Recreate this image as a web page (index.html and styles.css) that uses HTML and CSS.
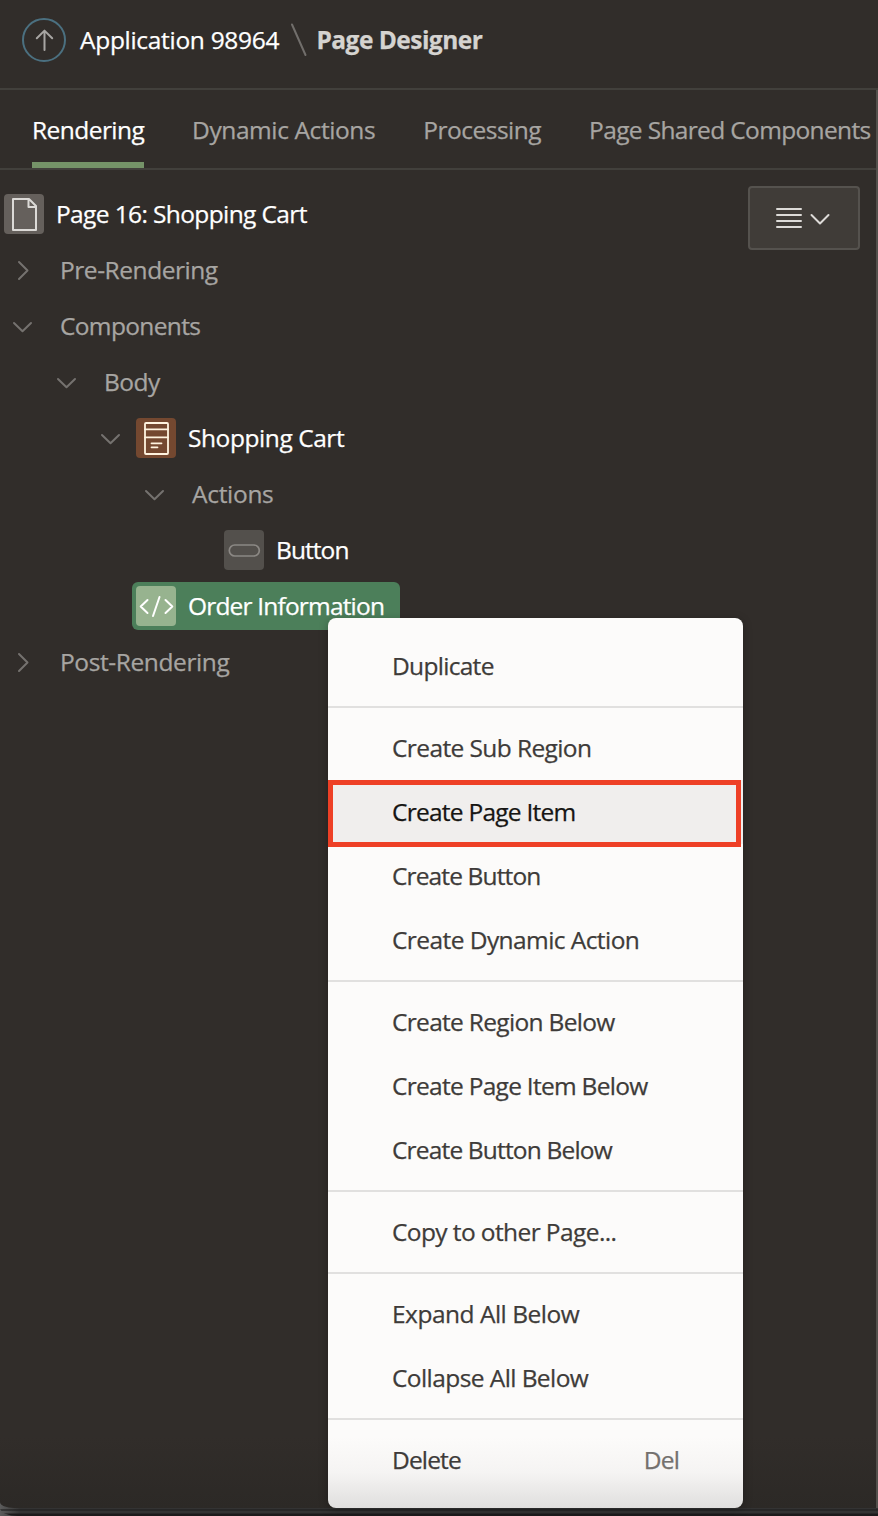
FILE: index.html
```html
<!DOCTYPE html>
<html lang="en">
<head>
<meta charset="utf-8">
<title>Page Designer</title>
<link rel="stylesheet" href="styles.css">
</head>
<body>
<svg class="defs" width="0" height="0" aria-hidden="true">
  <symbol id="down" viewBox="0 0 24 24"><path d="M4 9 12.500 17.300 21 9"/></symbol>
  <symbol id="right" viewBox="0 0 24 24"><path d="M13 4 21.500 12.500 13 21" transform="translate(-4 0)"/></symbol>
</svg>
<div class="app">
  <header class="header">
    <a class="up"><svg width="44" height="44" viewBox="0 0 44 44"><circle cx="22" cy="22" r="21"/><path d="M22.500 32V13M14.800 20.200 22.500 12.600 30.200 20.200"/></svg></a>
    <span class="crumb">Application 98964</span>
    <svg class="slash" width="18" height="34" viewBox="0 0 18 34"><path d="M2 1.500 15.500 32"/></svg>
    <span class="crumb current">Page Designer</span>
  </header>
  <div class="panel">
    <nav class="tabs">
      <a class="tab active">Rendering</a>
      <a class="tab dyn">Dynamic Actions</a>
      <a class="tab proc">Processing</a>
      <a class="tab shared">Page Shared Components</a>
    </nav>
    <div class="content">
      <ul class="tree">
        <li class="row"><span class="icon page"><svg viewBox="0 0 40 40"><path d="M9 5H25L32 12V36H9ZM24.500 5V13H32"/></svg></span><span class="name t-page">Page 16: Shopping Cart</span></li>
        <li class="row l1"><svg class="chev"><use href="#right"/></svg><span class="name muted t-pre">Pre-Rendering</span></li>
        <li class="row l1"><svg class="chev"><use href="#down"/></svg><span class="name muted t-comp">Components</span></li>
        <li class="row l2"><svg class="chev"><use href="#down"/></svg><span class="name muted t-body">Body</span></li>
        <li class="row l3"><svg class="chev"><use href="#down"/></svg><span class="node"><span class="icon cart"><svg viewBox="0 0 40 40"><rect x="9" y="5" width="23" height="31" rx="1"/><path d="M9 11.300H32M9 19.300H32M15.500 25.300H25.500M15.500 29.300H21.500"/></svg></span><span class="name t-cart">Shopping Cart</span></span></li>
        <li class="row l4"><svg class="chev"><use href="#down"/></svg><span class="name muted t-act">Actions</span></li>
        <li class="row l5"><span class="icon button"><svg viewBox="0 0 40 40"><rect x="5.300" y="15" width="30" height="11" rx="5.500"/></svg></span><span class="name t-btn">Button</span></li>
        <li class="row leaf"><span class="node selected"><span class="icon code"><svg viewBox="0 0 40 40"><path d="M11.500 14 4.700 20.500 11.500 27M29.500 14 36.300 20.500 29.500 27M23.500 11 17 30"/></svg></span><span class="name t-order">Order Information</span></span></li>
        <li class="row l1"><svg class="chev"><use href="#right"/></svg><span class="name muted t-post">Post-Rendering</span></li>
      </ul>
      <button class="view"><svg width="26" height="22" viewBox="0 0 26 22"><path d="M1 2H25M1 8H25M1 14H25M1 20H25"/></svg><svg width="20" height="16" viewBox="0 0 20 16"><path d="M1.500 5 10 13.500 18.500 5"/></svg></button>
    </div>
  </div>
  <footer class="edge"></footer>
  <div class="menu">
    <div class="group"><a class="m-dup">Duplicate</a></div>
    <div class="group"><a class="m-sub">Create Sub Region</a><a class="m-item hot">Create Page Item</a><a class="m-but">Create Button</a><a class="m-dyn">Create Dynamic Action</a></div>
    <div class="group"><a class="m-reg">Create Region Below</a><a class="m-pib">Create Page Item Below</a><a class="m-bb">Create Button Below</a></div>
    <div class="group"><a class="m-copy">Copy to other Page...</a></div>
    <div class="group"><a class="m-exp">Expand All Below</a><a class="m-col">Collapse All Below</a></div>
    <div class="group"><a class="m-del"><span>Delete</span><span class="key">Del</span></a></div>
  </div>
</div>
</body>
</html>
```
FILE: styles.css
```css
* { box-sizing: border-box; }
body { margin: 0; font: 24.5px/1 "Open Sans", "Noto Sans", sans-serif; background: #312d2a; color: #fff; -webkit-text-stroke: 0.25px currentColor; }
svg { display: block; fill: none; stroke-linecap: round; stroke-linejoin: round; }
.defs { position: absolute; }
.app { position: relative; display: flex; flex-direction: column; width: 878px; height: 1516px; overflow: hidden; white-space: nowrap; background: linear-gradient(90deg, #5c5c5c, #333 20px); }
.header { display: flex; align-items: center; height: 90px; padding: 0 0 8px 22px; background: #312d2a; border-bottom: 2px solid #42403c; }
.up circle { stroke: #4b7080; stroke-width: 2; }
.up path { stroke: #a8a6a3; stroke-width: 2; }
.crumb { margin-left: 14px; width: 199px; letter-spacing: -0.3px; }
.slash { margin-left: 11px; stroke: #716e6b; stroke-width: 2; }
.crumb.current { margin-left: 8.5px; width: auto; font-weight: 700; color: #d5d3d0; letter-spacing: -0.53px; }
.panel { display: flex; flex-direction: column; flex: 1; border-right: 2px solid #53504c; border-bottom-left-radius: 14px 6px; background: linear-gradient(#312d2a 95%, #2c2926); }
.tabs { display: flex; gap: 48px; height: 80px; padding-left: 32px; border-bottom: 2px solid #42403c; }
.tab { height: 78px; line-height: 80px; color: #a7a5a2; }
.tab.active { width: 112px; color: #fff; border-bottom: 6px solid #759368; letter-spacing: -0.55px; }
.dyn { letter-spacing: -0.4px; }
.proc { letter-spacing: -0.5px; }
.shared { letter-spacing: -0.65px; }
.content { display: flex; justify-content: space-between; align-items: flex-start; padding: 16px 16px 0 4px; }
.tree { margin: 0; padding: 0; list-style: none; }
.row { display: flex; align-items: center; height: 56px; }
.icon { display: block; width: 40px; height: 40px; border-radius: 4px; margin-right: 12px; }
.icon svg { width: 40px; height: 40px; stroke-width: 2; }
.page { background: #65605c; }
.page svg { stroke: #dcdad7; }
.cart { background: #744830; }
.cart svg { stroke: #fff3df; stroke-width: 1.8; }
.button { background: #53504c; }
.button svg { stroke: #8b8884; stroke-width: 1.7; }
.code { background: #97b38f; }
.code svg { stroke: #fff; }
.muted { color: #a7a5a2; }
.t-page { letter-spacing: -0.62px; }
.t-pre { letter-spacing: -0.45px; }
.t-comp { letter-spacing: -0.65px; }
.t-body { letter-spacing: -0.5px; }
.t-cart { letter-spacing: -0.43px; }
.t-act { letter-spacing: -0.3px; }
.t-btn { letter-spacing: -0.93px; }
.t-order { letter-spacing: -0.82px; }
.t-post { letter-spacing: -0.4px; }
.chev { width: 24px; height: 24px; stroke: #75726f; stroke-width: 2; margin-right: 26px; }
.l1 { padding-left: 6px; }
.l2 { padding-left: 50px; }
.l3 { padding-left: 94px; }
.l3 .chev { margin-right: 14px; }
.l4 { padding-left: 138px; }
.l5 { padding-left: 220px; }
.leaf { padding-left: 128px; }
.node { display: flex; align-items: center; }
.selected { width: 268px; height: 48px; padding-left: 4px; border-radius: 6px; background: #4c7f5a; }
.view { display: flex; align-items: center; justify-content: center; gap: 8px; width: 112px; height: 64px; padding: 0 3px 0 0; border: 2px solid #55524e; border-radius: 4px; background: #403c38; stroke: #dddbd8; stroke-width: 2; }
.edge { height: 8px; border-bottom-left-radius: 18px 8px; background: linear-gradient(transparent 1px, #1f1f1f99 1px 3px, transparent 3px 5px, #1c1a1b 6px); }
.menu { position: absolute; left: 328px; top: 618px; width: 415px; height: 890px; padding: 8px 0; border-radius: 8px; background: linear-gradient(#fcfbfa 92%, #f5f4f3 96%, #e0dfde); box-shadow: 0 2px 10px #0004; color: #3e3b39; }
.group { padding: 8px 0; border-top: 2px solid #e1e0df; }
.group:first-child { border-top: 0; }
.menu a { position: relative; display: flex; justify-content: space-between; height: 64px; padding: 0 64px; line-height: 64px; }
.menu .hot { background: #f0eeed; color: #161513; }
.hot::after { content: ""; box-sizing: border-box; position: absolute; left: 0; top: 0; width: 413px; height: 67px; border: 5px solid #ee4026; }
.m-dup { letter-spacing: -0.7px; }
.m-sub { letter-spacing: -0.6px; }
.m-item { letter-spacing: -0.75px; }
.m-but { letter-spacing: -0.87px; }
.m-dyn { letter-spacing: -0.57px; }
.m-reg { letter-spacing: -0.69px; }
.m-pib { letter-spacing: -0.72px; }
.m-bb { letter-spacing: -0.83px; }
.m-copy { letter-spacing: -0.6px; }
.m-exp { letter-spacing: -0.5px; }
.m-col { letter-spacing: -0.58px; }
.m-del { letter-spacing: -0.85px; }
.key { color: #73706e; }
```
